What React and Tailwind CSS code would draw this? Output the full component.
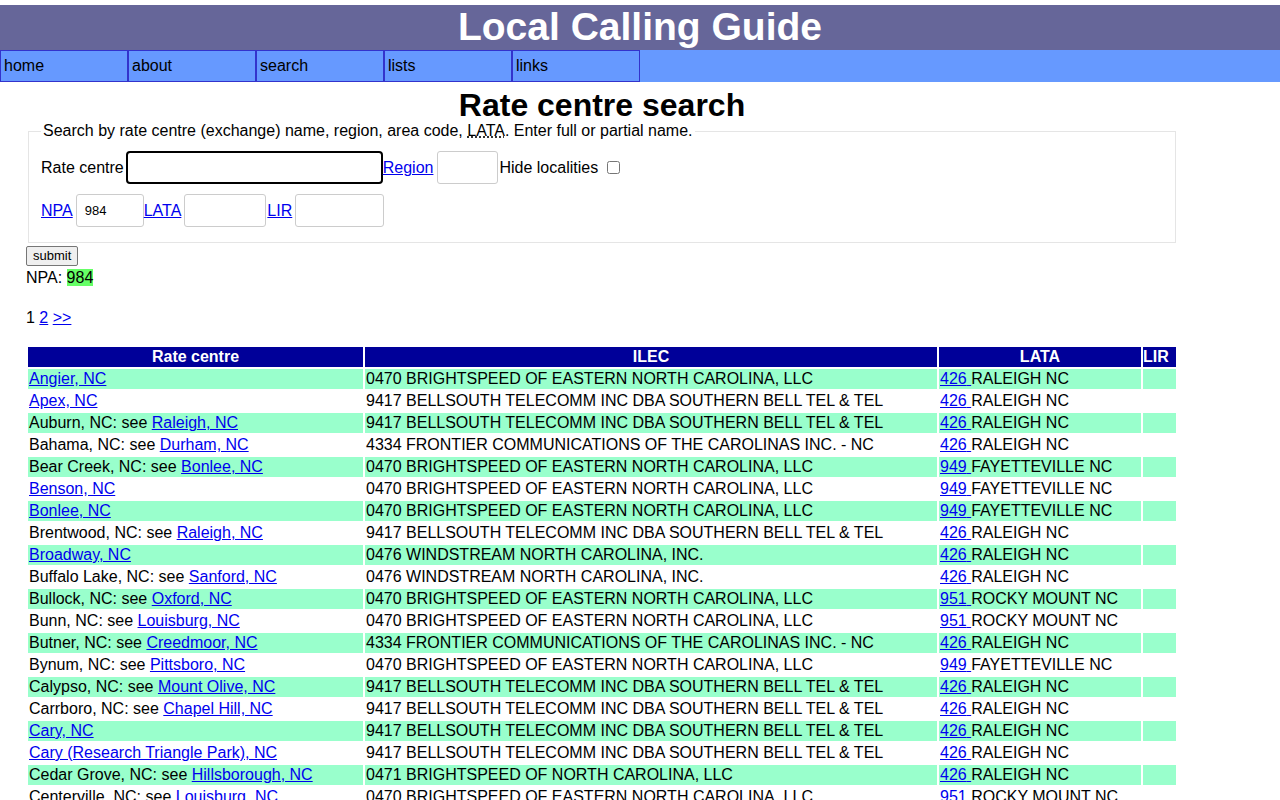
const rows = [
["Angier, NC",null,"0470 BRIGHTSPEED OF EASTERN NORTH CAROLINA, LLC","426","RALEIGH NC"],
["Apex, NC",null,"9417 BELLSOUTH TELECOMM INC DBA SOUTHERN BELL TEL & TEL","426","RALEIGH NC"],
["Auburn, NC","Raleigh, NC","9417 BELLSOUTH TELECOMM INC DBA SOUTHERN BELL TEL & TEL","426","RALEIGH NC"],
["Bahama, NC","Durham, NC","4334 FRONTIER COMMUNICATIONS OF THE CAROLINAS INC. - NC","426","RALEIGH NC"],
["Bear Creek, NC","Bonlee, NC","0470 BRIGHTSPEED OF EASTERN NORTH CAROLINA, LLC","949","FAYETTEVILLE NC"],
["Benson, NC",null,"0470 BRIGHTSPEED OF EASTERN NORTH CAROLINA, LLC","949","FAYETTEVILLE NC"],
["Bonlee, NC",null,"0470 BRIGHTSPEED OF EASTERN NORTH CAROLINA, LLC","949","FAYETTEVILLE NC"],
["Brentwood, NC","Raleigh, NC","9417 BELLSOUTH TELECOMM INC DBA SOUTHERN BELL TEL & TEL","426","RALEIGH NC"],
["Broadway, NC",null,"0476 WINDSTREAM NORTH CAROLINA, INC.","426","RALEIGH NC"],
["Buffalo Lake, NC","Sanford, NC","0476 WINDSTREAM NORTH CAROLINA, INC.","426","RALEIGH NC"],
["Bullock, NC","Oxford, NC","0470 BRIGHTSPEED OF EASTERN NORTH CAROLINA, LLC","951","ROCKY MOUNT NC"],
["Bunn, NC","Louisburg, NC","0470 BRIGHTSPEED OF EASTERN NORTH CAROLINA, LLC","951","ROCKY MOUNT NC"],
["Butner, NC","Creedmoor, NC","4334 FRONTIER COMMUNICATIONS OF THE CAROLINAS INC. - NC","426","RALEIGH NC"],
["Bynum, NC","Pittsboro, NC","0470 BRIGHTSPEED OF EASTERN NORTH CAROLINA, LLC","949","FAYETTEVILLE NC"],
["Calypso, NC","Mount Olive, NC","9417 BELLSOUTH TELECOMM INC DBA SOUTHERN BELL TEL & TEL","426","RALEIGH NC"],
["Carrboro, NC","Chapel Hill, NC","9417 BELLSOUTH TELECOMM INC DBA SOUTHERN BELL TEL & TEL","426","RALEIGH NC"],
["Cary, NC",null,"9417 BELLSOUTH TELECOMM INC DBA SOUTHERN BELL TEL & TEL","426","RALEIGH NC"],
["Cary (Research Triangle Park), NC",null,"9417 BELLSOUTH TELECOMM INC DBA SOUTHERN BELL TEL & TEL","426","RALEIGH NC"],
["Cedar Grove, NC","Hillsborough, NC","0471 BRIGHTSPEED OF NORTH CAROLINA, LLC","426","RALEIGH NC"],
["Centerville, NC","Louisburg, NC","0470 BRIGHTSPEED OF EASTERN NORTH CAROLINA, LLC","951","ROCKY MOUNT NC"],
];
const A = ({children}) => <a href="#" className="text-[#0000ee] underline">{children}</a>;
const inp = "border border-[#ccc] rounded-[3px] h-[33px] px-2 text-[13px]";
export default function App(){
  return (
    <div className="font-[family-name:Liberation_Sans,Arial,sans-serif] text-[16px] text-black bg-white min-h-[800px] pt-[5px]">
      <div className="bg-[#666699] text-white text-center font-bold text-[39px] leading-[44px] h-[45px]">Local Calling Guide</div>
      <div className="bg-[#6699ff] flex h-[32px]">
        {["home","about","search","lists","links"].map(n=>(
          <div key={n} className="w-[128px] border border-[#3333cc] px-[3px] leading-[30px]">{n}</div>
        ))}
      </div>
      <h1 className="text-center font-bold text-[32px] leading-[36px] mt-[5px] mr-[76px]">Rate centre search</h1>
      <div className="px-[26px]">
        <fieldset className="border border-[#e5e5e5] ml-[2px] mr-[78px] px-[12px] pb-[15px] -mt-[4px]">
          <legend className="px-[2px]">Search by rate centre (exchange) name, region, area code, <span className="underline decoration-dotted">LATA</span>. Enter full or partial name.</legend>
          <div className="flex items-center mt-[8px]">
            <span className="mr-[2px]">Rate centre</span>
            <div className="w-[257px] h-[33px] border-2 border-black rounded-[4px]"></div>
            <A>Region</A>
            <div className={inp+" w-[61px] ml-[4px]"}></div>
            <span className="ml-[1px]">Hide localities</span>
            <input type="checkbox" className="ml-[9px] w-[13px] h-[13px]" />
          </div>
          <div className="flex items-center mt-[10px]">
            <A>NPA</A>
            <div className={inp+" w-[68px] ml-[3px] leading-[31px]"}>984</div>
            <A>LATA</A>
            <div className={inp+" w-[82px] ml-[3px] mr-[1px]"}></div>
            <A>LIR</A>
            <div className={inp+" w-[89px] ml-[3px]"}></div>
          </div>
        </fieldset>
        <button className="mt-[1px] border border-[#767676] bg-[#efefef] rounded-[2px] text-[13px] px-[6px] h-[20px] leading-[18px]">submit</button>
        <div className="leading-[22px]">NPA: <span className="bg-[#66ff66]">984</span></div>
        <div className="mt-[18px] leading-[22px]">1 <A>2</A> <A>&gt;&gt;</A></div>
        <table className="mt-[16px] border-separate border-spacing-[2px] w-[1152px]">
          <thead>
            <tr className="bg-[#000099] text-white font-bold h-[20px] leading-[20px]">
              <th className="w-[335px]">Rate centre</th>
              <th className="w-[572px]">ILEC</th>
              <th className="w-[202px]">LATA</th>
              <th className="text-left">LIR</th>
            </tr>
          </thead>
          <tbody>
            {rows.map((r,i)=>(
              <tr key={i} className={(i%2===0?"bg-[#99ffcc] ":"")+"h-[20px] leading-[20px]"}>
                <td className="p-0 pl-[1px] whitespace-nowrap">{r[1]?<>{r[0]}: see <A>{r[1]}</A></>:<A>{r[0]}</A>}</td>
                <td className="p-0 pl-[1px] whitespace-nowrap">{r[2]}</td>
                <td className="p-0 pl-[1px] whitespace-nowrap"><A>{r[3]} </A>{r[4]}</td>
                <td></td>
              </tr>
            ))}
          </tbody>
        </table>
      </div>
    </div>
  );
}
